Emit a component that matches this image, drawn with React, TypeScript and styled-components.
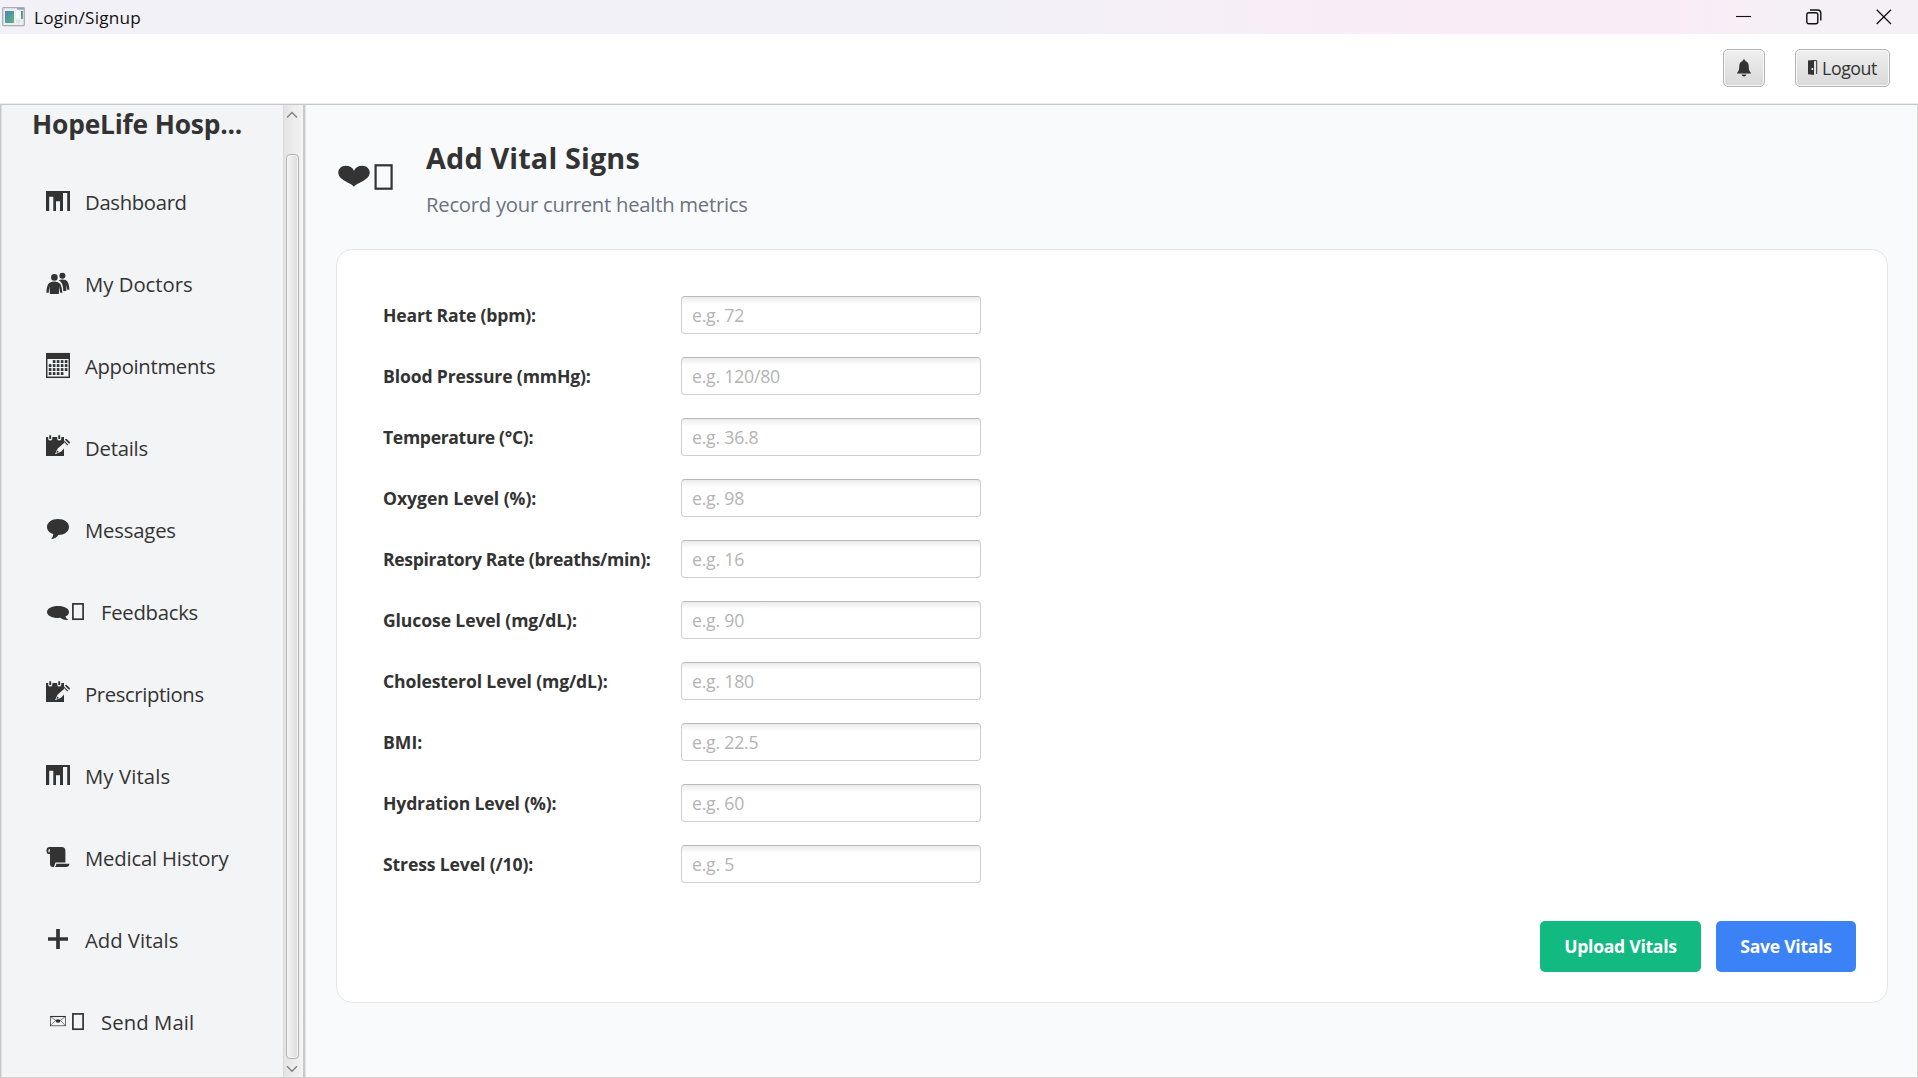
import React from 'react';
import styled, { createGlobalStyle } from 'styled-components';

const GlobalStyle = createGlobalStyle`
  * { box-sizing: border-box; }
  body { margin: 0; overflow: hidden; background: #fff; }
`;

const font = '"Segoe UI", "Open Sans", "Noto Sans", sans-serif';

const Window = styled.div`
  display: flex;
  flex-direction: column;
  width: 1918px;
  height: 1078px;
  background: #fff;
  color: #333;
  font-family: ${font};
  font-weight: 400;
  white-space: nowrap;
`;

const TitleBar = styled.header`
  display: flex;
  align-items: center;
  flex: none;
  height: 34px;
  padding: 0 26px 0 2px;
  background: linear-gradient(90deg, #f3f1f8 0%, #f3f1f8 52%, #f9ecf6 75%, #faecf6 87%, #f5f0f6 93%, #f5f0f6 100%);
`;

const WindowTitle = styled.span`
  flex: 1;
  margin-left: 9px;
  font-size: 17.2px;
  letter-spacing: 0.2px;
  color: #111;
`;

const WindowControls = styled.div`
  display: flex;
  align-items: center;
  gap: 54px;
`;

const Toolbar = styled.div`
  display: flex;
  justify-content: flex-end;
  align-items: center;
  flex: none;
  gap: 30px;
  height: 70px;
  padding: 0 28px 2px 0;
  border-bottom: 1px solid #ebebeb;
`;

const ToolButton = styled.button<{ $width: number }>`
  display: flex;
  align-items: center;
  justify-content: center;
  gap: 4px;
  width: ${(p) => p.$width}px;
  height: 38px;
  padding: 0;
  border: 1px solid #b3b3b3;
  border-radius: 5px;
  background: linear-gradient(#efefef, #d9d9d9);
  box-shadow: inset 0 0 0 1px #f8f8f8;
  color: #333;
  font: 400 17.8px ${font};
  letter-spacing: -0.45px;
`;

const SplitPane = styled.div`
  display: flex;
  flex: 1;
  min-height: 0;
  border: 1px solid #c8c8c8;
  border-right-color: #d4d4d4;
  border-bottom-color: #d4d4d4;
`;

const Sidebar = styled.aside`
  display: flex;
  flex: none;
  width: 300px;
  background: #f3f4f6;
  border-left: 1px solid #dfe0e1;
`;

const SidebarContent = styled.div`
  flex: 1;
  padding: 0 0 0 30px;
`;

const Brand = styled.h1`
  margin: 0;
  height: 56px;
  line-height: 39px;
  font-size: 26.4px;
  font-weight: 700;
  letter-spacing: -0.2px;
`;

const NavList = styled.nav`
  display: flex;
  flex-direction: column;
`;

const NavItem = styled.a<{ $spacing: number }>`
  display: flex;
  align-items: center;
  gap: 15px;
  height: 82px;
  padding-left: 14px;
  font-size: 20.3px;
  letter-spacing: ${(p) => p.$spacing}px;
`;

const ScrollBar = styled.div`
  display: flex;
  flex-direction: column;
  flex: none;
  width: 18px;
  border-left: 1px solid #dadada;
  background: linear-gradient(90deg, #e4e4e4, #ededed 60%, #f1f1f1);
`;

const ScrollArrow = styled.div<{ $height: number }>`
  display: flex;
  align-items: center;
  justify-content: center;
  flex: none;
  height: ${(p) => p.$height}px;
  padding: 1px 2px 0 0;
`;

const ScrollThumb = styled.div`
  flex: 1;
  margin: 31px 2px 0;
  border: 1px solid #b2b2b2;
  border-radius: 4px;
  background: linear-gradient(90deg, #f4f4f4, #dcdcdc);
  box-shadow: inset 0 0 0 1px #f6f6f6;
`;

const Divider = styled.div`
  flex: none;
  width: 5px;
  border-left: 2px solid #f5f5f5;
  border-right: 1px solid #e4e4e5;
  background: #c9c9c9;
`;

const Main = styled.main`
  flex: 1;
  padding: 33px 29px 0 30px;
  background: #f9fafc;
`;

const PageHeader = styled.div`
  display: flex;
  align-items: flex-start;
  height: 111px;
  padding-left: 2px;
`;

const HeaderIcon = styled.div`
  flex: none;
  width: 88px;
  padding-top: 26px;
  line-height: 0;
`;

const PageTitle = styled.h2`
  margin: 0;
  line-height: 40px;
  font-size: 28.8px;
  font-weight: 700;
  letter-spacing: 0.15px;
`;

const PageSubtitle = styled.p`
  margin: 12px 0 0;
  line-height: 28px;
  font-size: 20.3px;
  letter-spacing: -0.26px;
  color: #6b7280;
`;

const Card = styled.section`
  display: flex;
  flex-direction: column;
  justify-content: space-between;
  height: 754px;
  padding: 46px 31px 30px 46px;
  border: 1px solid #e3e5e9;
  border-radius: 16px;
  background: #fff;
`;

const Form = styled.form`
  display: grid;
  grid-template-columns: 298px 300px;
  grid-auto-rows: 38px;
  row-gap: 23px;
`;

const FieldLabel = styled.label<{ $spacing: number }>`
  line-height: 38px;
  font-size: 17.6px;
  font-weight: 700;
  letter-spacing: ${(p) => p.$spacing}px;
`;

const FieldInput = styled.input`
  width: 300px;
  height: 38px;
  padding: 0 10px;
  border: 1px solid #cfcfcf;
  border-top-color: #b9b9b9;
  border-radius: 4px;
  outline: none;
  background: linear-gradient(#ebebeb, #fff 7px);
  font: 400 17.7px ${font};
  letter-spacing: -0.23px;
  &::placeholder { color: #b4b4b4; opacity: 1; }
`;

const Actions = styled.div`
  display: flex;
  justify-content: flex-end;
  gap: 15px;
`;

const ActionButton = styled.button<{ $width: number; $color: string }>`
  width: ${(p) => p.$width}px;
  height: 51px;
  padding: 0 0 1px;
  border: 0;
  border-radius: 5px;
  background: ${(p) => p.$color};
  color: #fff;
  font: 700 17.6px ${font};
  letter-spacing: -0.28px;
`;

const ink = '#333';

function AppIcon() {
  return (
    <svg width="23" height="20" viewBox="0 0 23 20">
      <defs>
        <linearGradient id="screen" x1="0" y1="0" x2="1" y2="1">
          <stop offset="0" stopColor="#4a86b4" />
          <stop offset="1" stopColor="#5db57c" />
        </linearGradient>
      </defs>
      <rect x=".7" y=".7" width="21.6" height="18" rx="1" fill="#eceef0" stroke="#a9adb4" strokeWidth="1.3" />
      <rect x="15" y="1" width="7" height="1.6" fill="#8fa0bd" />
      <rect x="3" y="4" width="9" height="12" fill="url(#screen)" />
      <rect x="14" y="4" width="4" height="7" fill="#fafafa" />
      <rect x="19" y="4" width="2" height="8" fill="url(#screen)" />
      <rect x="14" y="13" width="4" height="3" fill="#dfe2e4" />
    </svg>
  );
}

function MinimizeIcon() {
  return <svg width="16" height="16" viewBox="0 0 16 16"><path d="M0 7.5H15" stroke="#111" strokeWidth="1.1" /></svg>;
}

function RestoreIcon() {
  return (
    <svg width="16" height="16" viewBox="0 0 16 16" fill="none" stroke="#111" strokeWidth="1.4">
      <rect x=".8" y="3.8" width="11" height="11" rx="2" />
      <path d="M4 1H11.5Q14.8 1 14.8 4.3V11.5" />
    </svg>
  );
}

function CloseIcon() {
  return <svg width="16" height="16" viewBox="0 0 16 16"><path d="M.7 .7L15 15M15 .7L.7 15" stroke="#111" strokeWidth="1.3" /></svg>;
}

function BellIcon() {
  return (
    <svg width="16" height="18" viewBox="0 0 16 18" fill={ink}>
      <path d="M8 .6C8.9 .6 9.3 1.1 9.3 2C11.6 2.7 12.6 4.6 12.7 7C12.8 10.6 13.3 12.4 15 14V14.6H1V14C2.7 12.4 3.2 10.6 3.3 7C3.4 4.6 4.4 2.7 6.7 2C6.7 1.1 7.1 .6 8 .6Z" />
      <path d="M5.5 15.6H10.5Q9.8 17.5 8 17.5T5.5 15.6Z" />
    </svg>
  );
}

function DoorIcon() {
  return (
    <svg width="10" height="15" viewBox="0 0 10 15">
      <path d="M0 .4L6 0V15L0 14.2Z" fill={ink} />
      <path d="M6 .6H8.7V14" fill="none" stroke={ink} strokeWidth="1" />
      <circle cx="4.3" cy="9" r="1" fill="#fff" />
    </svg>
  );
}

function HeartIcon() {
  return (
    <svg width="57" height="28" viewBox="0 0 57 28">
      <path d="M16 22.8C13 18.6 .3 16.5 .3 8.6C.3 4.6 3.6 1.8 7.7 1.8C11.5 1.8 14.6 3.6 16 6.8C17.4 3.6 20.5 1.8 24.3 1.8C28.4 1.8 31.7 4.6 31.7 8.6C31.7 16.5 19 18.6 16 22.8Z" fill={ink} />
      <rect x="37.6" y="1.3" width="16" height="23.4" fill="none" stroke={ink} strokeWidth="2.2" />
    </svg>
  );
}

function ChartIcon() {
  return (
    <svg width="24" height="28" viewBox="0 0 24 28">
      <path d="M0 3H24.3V23H21.2V5H17V23H14V13.3H10V23H7.3V8.8H3.2V23H0Z" fill={ink} />
    </svg>
  );
}

function PeopleIcon() {
  return (
    <svg width="24" height="28" viewBox="0 0 24 28" fill={ink}>
      <circle cx="16.4" cy="5.8" r="3" />
      <path d="M12.6 10.2Q14 9.4 16.4 9.4C21.2 9.4 23 12 23.4 19.8H21.2L20.7 14.5L20.2 21H17.3C17.2 16 16.4 12.2 12.6 10.2Z" />
      <circle cx="8.4" cy="7.4" r="3.3" />
      <path d="M.4 22.8C.6 14.6 2.6 11.4 8.2 11.4S16.1 14.6 16.3 22.8H14L13.3 16L12.8 24H3.9L3.4 16L2.7 22.8Z" />
    </svg>
  );
}

const calendarDays = [[1, 4], [0, 4], [0, 4], [0, 3]];

function CalendarIcon() {
  return (
    <svg width="24" height="28" viewBox="0 0 24 28">
      <rect x=".7" y="1.7" width="22.6" height="23.6" fill="none" stroke={ink} strokeWidth="1.5" />
      <rect x="0" y="1" width="24" height="6" fill={ink} />
      {calendarDays.map(([from, to], row) =>
        Array.from({ length: to - from + 1 }, (_, k) => (
          <rect key={`${row}-${k}`} x={2.8 + (from + k) * 4} y={8.1 + row * 4} width="2.6" height="2.9" fill={ink} />
        )),
      )}
    </svg>
  );
}

function NoteIcon() {
  return (
    <svg width="24" height="28" viewBox="0 0 24 28">
      <path d="M0 3H2.2V5Q2.5 6.6 4.2 6.6T6.3 5V3H11.2V5Q11.5 6.6 13.2 6.6T15.3 5V3H18V9L11.5 14.8L9 20.2L15 17.8L18 14.5V22H0Z" fill={ink} />
      <path d="M4.2 1.2V5M13.2 1.2V5" stroke={ink} strokeWidth="1.9" />
      <path d="M18.8 5.6L20.4 4.8L24 8.3L23.2 9.9Z M17.3 7.2L18 6.5L22.2 10.7L21.4 11.4Z" fill={ink} />
      <path d="M11.4 16.4L13 18L10.4 19.1Z" fill={ink} />
    </svg>
  );
}

function SpeechIcon() {
  return (
    <svg width="24" height="28" viewBox="0 0 24 28">
      <path d="M12 3C18.2 3 23 6.5 23 11S18.2 19 12.4 19C11 21.3 8.5 23 5.2 23Q7.2 21 7.3 18.1C3.5 17 1 14.3 1 11C1 6.5 5.8 3 12 3Z" fill={ink} />
    </svg>
  );
}

function FeedbackIcon() {
  return (
    <svg width="40" height="28" viewBox="0 0 40 28">
      <path d="M12 8C18.2 8 23 10.5 23 14C23 16 21.6 17.6 19.4 18.6Q19.8 20.7 22.6 21.8C18.6 22.3 15.8 21.3 14.4 19.8L12 20C5.8 20 1 17.4 1 14S5.8 8 12 8Z" fill={ink} />
      <rect x="26.9" y="5.9" width="10.2" height="15.3" fill="none" stroke={ink} strokeWidth="1.7" />
    </svg>
  );
}

function ScrollIcon() {
  return (
    <svg width="24" height="28" viewBox="0 0 24 28" fill={ink}>
      <path d="M3 3H15.5Q19.4 3 19.4 7V18.6H9.5L8 22.9H6.5Q4 22.9 4 20.5V10H1.6Q.4 8.5 .4 6.2Q.5 3.4 3 3ZM3.5 4.8Q2 5.2 2.4 8.3H3.6Q4.3 6 3.5 4.8Z" fillRule="evenodd" />
      <path d="M10.3 19.7H23.4Q23.2 22.9 20 22.9H9Q10.2 21.5 10.3 19.7Z" />
    </svg>
  );
}

function PlusIcon() {
  return <svg width="24" height="28" viewBox="0 0 24 28"><path d="M12 3V23M2 13H22" stroke={ink} strokeWidth="3.7" /></svg>;
}

function MailIcon() {
  return (
    <svg width="40" height="28" viewBox="0 0 40 28" fill="none" stroke={ink}>
      <rect x="4.4" y="8.5" width="15.2" height="9.3" strokeWidth=".7" />
      <path d="M4.4 8.5H19.6" strokeWidth="1.1" />
      <path d="M4.4 8.5L12 14L19.6 8.5M4.4 17.8L9.5 12.5M19.6 17.8L14.5 12.5" strokeWidth=".6" />
      <ellipse cx="12" cy="13" rx="2.4" ry="1.8" fill={ink} stroke="none" />
      <rect x="26.9" y="5.9" width="10.2" height="15.3" strokeWidth="1.7" />
    </svg>
  );
}

function Chevron({ down }: { down?: boolean }) {
  return (
    <svg width="12" height="8" viewBox="0 0 12 8">
      <path d={down ? 'M1 1.2L6 6.2L11 1.2' : 'M1 6.5L6 1.5L11 6.5'} fill="none" stroke="#808080" strokeWidth="1.4" />
    </svg>
  );
}

const navItems = [
  { label: 'Dashboard', Icon: ChartIcon, spacing: -0.33 },
  { label: 'My Doctors', Icon: PeopleIcon, spacing: 0 },
  { label: 'Appointments', Icon: CalendarIcon, spacing: -0.32 },
  { label: 'Details', Icon: NoteIcon, spacing: -0.23 },
  { label: 'Messages', Icon: SpeechIcon, spacing: -0.18 },
  { label: 'Feedbacks', Icon: FeedbackIcon, spacing: -0.26 },
  { label: 'Prescriptions', Icon: NoteIcon, spacing: -0.39 },
  { label: 'My Vitals', Icon: ChartIcon, spacing: 0.12 },
  { label: 'Medical History', Icon: ScrollIcon, spacing: -0.18 },
  { label: 'Add Vitals', Icon: PlusIcon, spacing: -0.01 },
  { label: 'Send Mail', Icon: MailIcon, spacing: 0.09 },
];

const fields = [
  { label: 'Heart Rate (bpm):', hint: 'e.g. 72', spacing: -0.18 },
  { label: 'Blood Pressure (mmHg):', hint: 'e.g. 120/80', spacing: -0.15 },
  { label: 'Temperature (°C):', hint: 'e.g. 36.8', spacing: -0.34 },
  { label: 'Oxygen Level (%):', hint: 'e.g. 98', spacing: -0.05 },
  { label: 'Respiratory Rate (breaths/min):', hint: 'e.g. 16', spacing: -0.35 },
  { label: 'Glucose Level (mg/dL):', hint: 'e.g. 90', spacing: -0.12 },
  { label: 'Cholesterol Level (mg/dL):', hint: 'e.g. 180', spacing: -0.14 },
  { label: 'BMI:', hint: 'e.g. 22.5', spacing: 0 },
  { label: 'Hydration Level (%):', hint: 'e.g. 60', spacing: -0.17 },
  { label: 'Stress Level (/10):', hint: 'e.g. 5', spacing: -0.14 },
];

export default function App() {
  return (
    <Window>
      <GlobalStyle />
      <TitleBar>
        <AppIcon />
        <WindowTitle>Login/Signup</WindowTitle>
        <WindowControls>
          <MinimizeIcon />
          <RestoreIcon />
          <CloseIcon />
        </WindowControls>
      </TitleBar>
      <Toolbar>
        <ToolButton $width={42} aria-label="Notifications"><BellIcon /></ToolButton>
        <ToolButton $width={95}><DoorIcon />Logout</ToolButton>
      </Toolbar>
      <SplitPane>
        <Sidebar>
          <SidebarContent>
            <Brand>HopeLife Hosp...</Brand>
            <NavList>
              {navItems.map(({ label, Icon, spacing }) => (
                <NavItem key={label} $spacing={spacing}><Icon />{label}</NavItem>
              ))}
            </NavList>
          </SidebarContent>
          <ScrollBar>
            <ScrollArrow $height={18}><Chevron /></ScrollArrow>
            <ScrollThumb />
            <ScrollArrow $height={18}><Chevron down /></ScrollArrow>
          </ScrollBar>
        </Sidebar>
        <Divider />
        <Main>
          <PageHeader>
            <HeaderIcon><HeartIcon /></HeaderIcon>
            <div>
              <PageTitle>Add Vital Signs</PageTitle>
              <PageSubtitle>Record your current health metrics</PageSubtitle>
            </div>
          </PageHeader>
          <Card>
            <Form>
              {fields.map(({ label, hint, spacing }) => (
                <React.Fragment key={label}>
                  <FieldLabel $spacing={spacing}>{label}</FieldLabel>
                  <FieldInput placeholder={hint} aria-label={label} />
                </React.Fragment>
              ))}
            </Form>
            <Actions>
              <ActionButton $width={161} $color="#12b981">Upload Vitals</ActionButton>
              <ActionButton $width={140} $color="#3b82f6">Save Vitals</ActionButton>
            </Actions>
          </Card>
        </Main>
      </SplitPane>
    </Window>
  );
}
